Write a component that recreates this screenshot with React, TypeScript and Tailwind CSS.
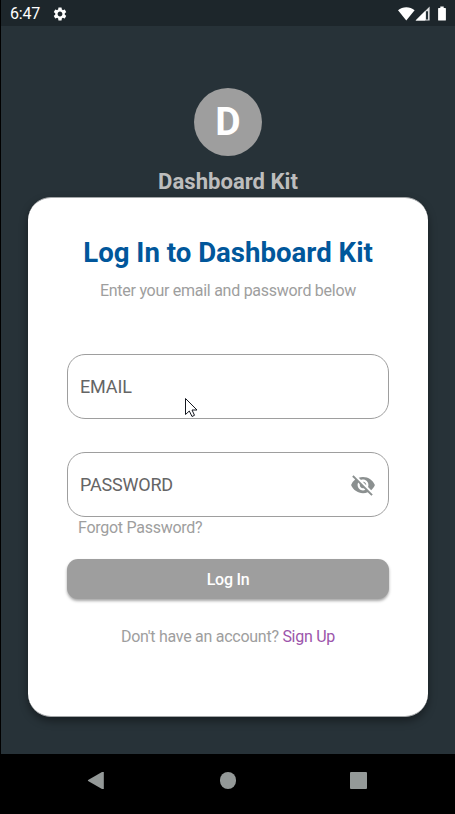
import React from "react";
import { MdSettings, MdVisibilityOff } from "react-icons/md";

function StatusBar() {
  return (
    <header className="flex h-[26px] shrink-0 items-center bg-[#1d262b] pl-[9px] pr-[8px] text-white">
      <span className="w-[31px] whitespace-nowrap pt-[2px] text-[16px] leading-[20px] tracking-[-0.2px]">6:47</span>
      <MdSettings className="ml-[11px] mt-px size-[16px]" />
      <svg className="ml-auto mt-px" width="49" height="16" viewBox="0 0 49 16" fill="currentColor">
        <path d="M0 4.2C4.6.2 12 .2 16.6 4.2L8.3 14.4z" />
        <path d="M31.6.6V14.6H17.6z" fillOpacity=".85" />
        <path d="M27.2 5V14.6H17.6z" />
        <path d="M28 5.2h2v8.4h-2z" fill="#263238" />
        <path d="M42.3.6h3.4v1.3h1.5q.7 0 .7.7v11.3q0 .7-.7.7h-6.4q-.7 0-.7-.7V2.6q0-.7.7-.7h1.5z" />
      </svg>
    </header>
  );
}

function NavBar() {
  return (
    <nav className="flex h-[60px] shrink-0 items-start justify-between bg-black pl-[86px] pr-[88px] pt-[18px]">
      <svg width="18" height="18" viewBox="0 0 18 18" fill="#949998">
        <path d="M16.8 0V17H15L1.1 9.1Q.5 8.5 1.1 7.9L15 0z" />
      </svg>
      <div className="ml-px size-[16.5px] rounded-full bg-[#949998]" />
      <div className="size-[17px] rounded-[1px] bg-[#949998]" />
    </nav>
  );
}

export default function App() {
  return (
    <div className="relative flex h-[814px] w-[455px] flex-col overflow-hidden border-l border-black bg-[#273238] font-[Roboto,sans-serif]">
      <StatusBar />
      <main className="flex flex-1 flex-col items-center">
        <div className="mt-[62px] flex size-[68px] items-center justify-center rounded-full bg-[#9e9e9e] text-[39px] font-bold text-white">
          <span className="mt-px leading-none">D</span>
        </div>
        <h1 className="mt-[12px] h-[29px] text-[22.1px] font-bold leading-[27px] text-[#bdbdbd]">Dashboard Kit</h1>
        <section className="flex h-[520px] w-[400px] flex-col rounded-[23px] border-y border-[#a3a6a8] bg-white px-[39px] text-center text-[#9e9e9e] shadow-[0_4px_8px_rgba(0,0,0,0.4)]">
          <h2 className="mt-[39px] whitespace-nowrap text-[27.6px] font-bold leading-[32px] text-[#01579b]">Log In to Dashboard Kit</h2>
          <p className="mt-[12px] whitespace-nowrap text-[16px] leading-[20px] tracking-[-0.27px]">Enter your email and password below</p>
          <div className="mt-[53px] flex h-[65px] items-center rounded-[18px] border border-[#9e9e9e] px-[12px] text-[18px] leading-[26px] tracking-[-0.15px] text-[#656565]">
            <span className="mt-px">EMAIL</span>
          </div>
          <div className="mt-[33px] flex h-[65px] items-center justify-between rounded-[18px] border border-[#9e9e9e] px-[12px] text-[18px] leading-[26px] tracking-[-0.2px] text-[#656565]">
            <span className="mt-px">PASSWORD</span>
            <MdVisibilityOff className="size-[26px] text-[#8b9090]" />
          </div>
          <p className="ml-[11px] mt-px text-left text-[16px] leading-[20px] tracking-[-0.27px]">Forgot Password?</p>
          <button className="mt-[21px] h-[40px] shrink-0 rounded-[11px] bg-[#9e9e9e] pt-px text-[16px] font-medium leading-[20px] tracking-[-0.27px] text-white shadow-[0_2px_3px_rgba(0,0,0,0.35)]">Log In</button>
          <p className="mt-[28px] whitespace-nowrap text-[16px] leading-[20px] tracking-[-0.27px]">
            Don't have an account? <span className="text-[#9c55ab]">Sign Up</span>
          </p>
        </section>
      </main>
      <NavBar />
      <svg className="absolute left-[184px] top-[397px]" width="13" height="21" viewBox="0 0 13 21">
        <path d="M.5 1.5V17.5L4.3 14 7 19.5 9.5 18.3 7 13H12z" fill="white" stroke="#151820" />
      </svg>
    </div>
  );
}
